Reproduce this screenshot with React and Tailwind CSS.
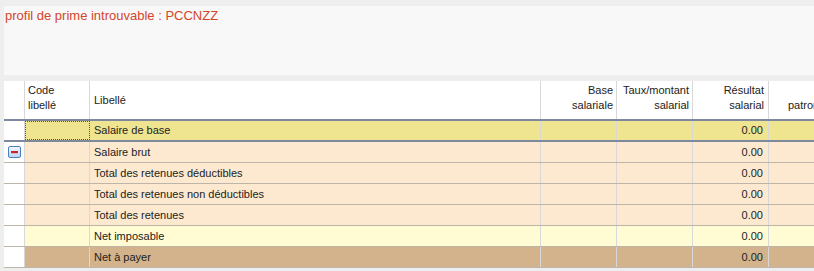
import React from "react";

const cols = "grid-cols-[21px_65px_451px_76px_76px_76px_1fr]";

const rows = [
  { label: "Salaire de base", bg: "bg-[#efe48f]", selected: true },
  { label: "Salaire brut", bg: "bg-[#fde9d0]", toggle: true },
  { label: "Total des retenues déductibles", bg: "bg-[#fde9d0]" },
  { label: "Total des retenues non déductibles", bg: "bg-[#fde9d0]" },
  { label: "Total des retenues", bg: "bg-[#fde9d0]" },
  { label: "Net imposable", bg: "bg-[#fffbd2]" },
  { label: "Net à payer", bg: "bg-[#d3b38b]" },
];

const MinusBox = () => (
  <svg width="13" height="12" viewBox="0 0 13 12">
    <defs>
      <linearGradient id="mb" x1="0" y1="0" x2="0" y2="1">
        <stop offset="0" stopColor="#f4f9ff" />
        <stop offset="1" stopColor="#b9d4f0" />
      </linearGradient>
    </defs>
    <rect x="0.5" y="0.5" width="12" height="11" rx="1.5" fill="url(#mb)" stroke="#4a7fc0" />
    <rect x="3" y="5" width="7" height="2.2" fill="#d0202a" />
  </svg>
);

const Row = ({ row }) => {
  const border = row.selected ? "border-b-2 border-[#7e889e]" : "border-b border-[#bdb4aa]";
  return (
    <div className={`grid ${cols} h-[21px] ${border} text-[11px] text-[#222]`}>
      <div className="bg-white flex items-center justify-center border-r border-[#d8d8d8]">
        {row.toggle && <MinusBox />}
      </div>
      <div
        className={`${row.bg} border-r border-[#d8d8d8] ${
          row.selected ? "outline-1 outline-dotted outline-[#555] -outline-offset-1" : ""
        }`}
      />
      <div className={`${row.bg} border-r border-[#d8d8d8] flex items-center px-[4px]`}>{row.label}</div>
      <div className={`${row.bg} border-r border-[#d8d8d8]`} />
      <div className={`${row.bg} border-r border-[#d8d8d8]`} />
      <div className={`${row.bg} border-r border-[#d8d8d8] flex items-center justify-end pr-[5px]`}>0.00</div>
      <div className={row.bg} />
    </div>
  );
};

export default function App() {
  return (
    <div className="w-[814px] h-[271px] bg-[#eeeeee] overflow-hidden font-['Liberation_Sans',Arial,sans-serif] pt-[6px]">
      <div className="ml-[4px] h-[69px] bg-[#f8f8f8] px-[1px] pt-[2px]">
        <p className="text-[13px] text-[#d4452a] leading-[16px]">profil de prime introuvable : PCCNZZ</p>
      </div>
      <div className="ml-[4px] mt-[6px]">
        <div className={`grid ${cols} h-[40px] bg-white text-[11px] text-[#222] leading-[15px] border-b-2 border-[#7e889e]`}>
          <div className="border-r border-[#d8d8d8]" />
          <div className="border-r border-[#d8d8d8] px-[3px] pt-[2px]">
            Code
            <br />
            libellé
          </div>
          <div className="border-r border-[#d8d8d8] px-[4px] flex items-center">Libellé</div>
          <div className="border-r border-[#d8d8d8] pr-[3px] pt-[2px] text-right">
            Base
            <br />
            salariale
          </div>
          <div className="border-r border-[#d8d8d8] pr-[3px] pt-[2px] text-right whitespace-nowrap">
            Taux/montant
            <br />
            salarial
          </div>
          <div className="border-r border-[#d8d8d8] pr-[4px] pt-[2px] text-right">
            Résultat
            <br />
            salarial
          </div>
          <div className="pl-[19px] pt-[17px] whitespace-nowrap">patronal</div>
        </div>
        {rows.map((r) => (
          <Row key={r.label} row={r} />
        ))}
      </div>
    </div>
  );
}
